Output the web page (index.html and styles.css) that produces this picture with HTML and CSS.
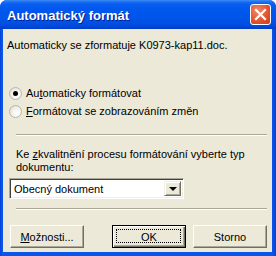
FILE: index.html
```html
<!DOCTYPE html>
<html lang="cs">
<head>
    <meta charset="UTF-8">
    <title>Automatický formát</title>
    <link rel="stylesheet" href="styles.css">
</head>
<body>
    <div class="window">
        <!-- Title bar -->
        <div class="titlebar">
            <span class="title">Automatický formát</span>
            <div class="close">
                <svg width="21" height="21" viewBox="0 0 21 21">
                    <path d="M6 6 L15 15 M15 6 L6 15" stroke="#fff" stroke-width="2.2" stroke-linecap="square"/>
                </svg>
            </div>
        </div>

        <!-- Dialog body -->
        <div class="client">
            <p class="msg">Automaticky se zformatuje K0973-kap11.doc.</p>

            <div class="options">
                <label class="radio-row">
                    <span class="radio checked"></span>
                    <span>Au<u>t</u>omaticky formátovat</span>
                </label>
                <label class="radio-row">
                    <span class="radio"></span>
                    <span><u>F</u>ormátovat se zobrazováním změn</span>
                </label>
            </div>

            <div class="separator"></div>

            <p class="prompt">Ke <u>z</u>kvalitnění procesu formátování vyberte typ dokumentu:</p>

            <div class="combo">
                <span class="combo-value">Obecný dokument</span>
                <span class="combo-button"><span class="arrow"></span></span>
            </div>

            <div class="separator separator-bottom"></div>

            <div class="buttons">
                <button class="btn"><u>M</u>ožnosti...</button>
                <div class="btn-right">
                    <button class="btn btn-default">OK</button>
                    <button class="btn">Storno</button>
                </div>
            </div>
        </div>
    </div>
</body>
</html>
```

FILE: styles.css
```css
/* General */
body {
    margin: 0;
    background: #fff;
    font-family: "Liberation Sans", Arial, sans-serif;
    font-size: 11px;
    color: #000;
}

/* Window frame */
.window {
    width: 276px;
    height: 256px;
    display: flex;
    flex-direction: column;
    background: linear-gradient(90deg, #0842d8, #0a56ea 2px, #0a56ea 272px, #0842d8);
    border-radius: 7px 7px 0 0;
    overflow: hidden;
}

.titlebar {
    height: 29px;
    flex: none;
    display: flex;
    align-items: center;
    justify-content: space-between;
    padding: 0 5px 0 7px;
    background: linear-gradient(#3d8cf5 0, #1a6ef2 2px, #0a5ef0 4px, #0058ee 9px, #0055ea 18px, #004fe3 24px, #0046d6 27px, #003cc4 29px);
}

.title {
    color: #fff;
    font-weight: bold;
    font-size: 13px;
    text-shadow: 1px 1px #0a1e8c;
    margin-top: 1px;
}

.close {
    width: 21px;
    height: 21px;
    box-sizing: border-box;
    border: 1px solid #fff;
    border-radius: 3px;
    background: radial-gradient(circle at 35% 30%, #f0886a, #e0512f 60%, #c8401f);
}

.close svg {
    display: block;
    margin: -1px;
}

.client {
    flex: 1;
    margin: 0 4px 4px 3px;
    background: #ece9d8;
    display: flex;
    flex-direction: column;
}

.msg {
    margin: 10px 0 0 4px;
    line-height: 13px;
}

/* Radio options */
.options {
    margin: 32px 0 0 6px;
}

.radio-row {
    height: 18px;
    display: flex;
    align-items: center;
    gap: 4px;
}

.radio {
    width: 13px;
    height: 13px;
    box-sizing: border-box;
    border-radius: 50%;
    border: 1px solid #b9b7ab;
    background: radial-gradient(circle at 65% 65%, #fff, #f2f1ea 50%, #d8d6c9);
    position: relative;
}

.radio.checked::after {
    content: "";
    position: absolute;
    left: 3px;
    top: 3px;
    width: 5px;
    height: 5px;
    border-radius: 50%;
    background: #000;
}

.separator {
    margin: 14px 5px 0 13px;
    border-top: 1px solid #aca899;
    border-bottom: 1px solid #fff;
}

.prompt {
    margin: 12px 4px 0 13px;
    line-height: 13px;
}

/* Combo box */
.combo {
    margin: 4px 0 0 6px;
    width: 175px;
    height: 21px;
    box-sizing: border-box;
    border: 1px solid;
    border-color: #aca899 #fff #fff #aca899;
    box-shadow: inset 1px 1px #404040, inset -1px -1px #f1efe2;
    background: #fff;
    display: flex;
    align-items: center;
    padding: 2px;
}

.combo-value {
    flex: 1;
    padding-left: 2px;
}

.combo-button {
    width: 17px;
    height: 100%;
    box-sizing: border-box;
    background: #ece9d8;
    border: 1px solid;
    border-color: #f1efe2 #716f64 #716f64 #f1efe2;
    box-shadow: inset 1px 1px #fff, inset -1px -1px #aca899;
    display: flex;
    align-items: center;
    justify-content: center;
}

.arrow {
    width: 0;
    height: 0;
    border-left: 4px solid transparent;
    border-right: 4px solid transparent;
    border-top: 4px solid #000;
    margin-top: 1px;
}

.separator-bottom {
    margin-top: 9px;
}

/* Buttons */
.buttons {
    margin: 15px 5px 0 7px;
    display: flex;
    justify-content: space-between;
}

.btn-right {
    display: flex;
    gap: 7px;
}

.btn {
    width: 74px;
    height: 23px;
    box-sizing: border-box;
    padding: 0;
    background: #ece9d8;
    font-family: "Liberation Sans", Arial, sans-serif;
    font-size: 11px;
    color: #000;
    border: 1px solid;
    border-color: #fff #716f64 #716f64 #fff;
    box-shadow: inset -1px -1px #aca899;
    position: relative;
}

.btn-default {
    border: 1px solid #000;
    box-shadow: inset 1px 1px #fff, inset -1px -1px #716f64, inset -2px -2px #aca899;
}

.btn-default::after {
    content: "";
    position: absolute;
    left: 3px;
    top: 3px;
    right: 4px;
    bottom: 4px;
    border: 1px dotted #000;
}
```
